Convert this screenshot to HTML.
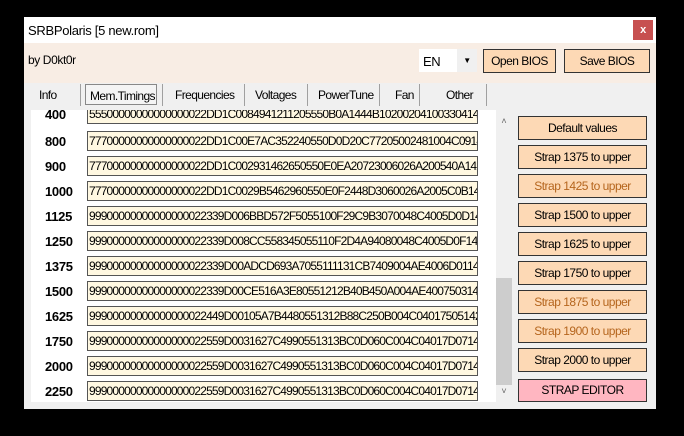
<!DOCTYPE html><html><head><style>
body{margin:0;background:#000;width:684px;height:436px;position:relative;overflow:hidden;font-family:"Liberation Sans",sans-serif;}
.win{position:absolute;left:24px;top:17px;width:632px;height:392px;background:#f0f0f0;}
.title{position:absolute;left:0;top:0;width:632px;height:26px;background:#fff;font-size:13px;letter-spacing:-0.3px}
.title span{position:absolute;left:4px;top:6px;}
.close{position:absolute;left:609px;top:3px;width:20px;height:20px;background:#c75050;color:#fff;font-size:11px;text-align:center;line-height:20px;font-weight:bold}
.head{position:absolute;left:0;top:26px;width:632px;height:40px;background:#f8ede4;font-size:12px;letter-spacing:-0.4px}
.btn{position:absolute;background:#fdd9b5;border:1px solid #333;box-sizing:border-box;font-size:12px;text-align:center;color:#000;letter-spacing:-0.5px;white-space:nowrap}
.tabs{position:absolute;top:66px;left:0;width:632px;height:27px;font-size:12px;letter-spacing:-0.6px}
.tab{position:absolute;top:5px;}
.sep{position:absolute;top:1px;width:1px;height:22px;background:#a0a0a0;}
.panel{position:absolute;left:7px;top:93px;width:473px;height:292px;background:#fff;overflow:hidden;}
.row{position:absolute;left:0;height:20px;}
.lbl{position:absolute;left:14px;top:3px;font-weight:bold;font-size:13px;letter-spacing:-0.3px}
.box{position:absolute;left:56px;top:0;width:391px;height:20px;background:#fff8e1;border:1px solid #555;box-sizing:border-box;font-size:12px;line-height:18px;padding-left:1px;overflow:hidden;white-space:nowrap;letter-spacing:-0.82px}
.sb{position:absolute;left:472px;top:93px;width:16px;height:292px;background:#f0f0f0;}
</style></head><body>
<div class="win">
<div class="title"><span>SRBPolaris [5 new.rom]</span><div class="close">x</div></div>
<div class="head"><span style="position:absolute;left:4px;top:10px">by D0kt0r</span>
<div style="position:absolute;left:395px;top:6px;width:58px;height:23px;background:#fff;font-size:13px"><span style="position:absolute;left:4px;top:5px">EN</span><div style="position:absolute;right:0;top:0;width:20px;height:23px;background:#f0f0f0;font-size:8px;text-align:center;line-height:23px">▼</div></div>
<div class="btn" style="left:459px;top:6px;width:73px;height:24px;line-height:22px">Open BIOS</div>
<div class="btn" style="left:540px;top:6px;width:86px;height:24px;line-height:22px">Save BIOS</div>
</div>
<div class="tabs">
<span class="tab" style="left:15px">Info</span><div class="sep" style="left:56px"></div>
<div style="position:absolute;left:61px;top:1px;width:72px;height:21px;border:1px solid #888;box-sizing:border-box;background:#f4f4f4"></div><span class="tab" style="left:66px;top:6px">Mem.Timings</span><div class="sep" style="left:138px"></div>
<span class="tab" style="left:151px">Frequencies</span><div class="sep" style="left:220px"></div>
<span class="tab" style="left:231px">Voltages</span><div class="sep" style="left:283px"></div>
<span class="tab" style="left:294px">PowerTune</span><div class="sep" style="left:355px"></div>
<span class="tab" style="left:371px">Fan</span><div class="sep" style="left:395px"></div>
<span class="tab" style="left:422px">Other</span><div class="sep" style="left:462px"></div>
</div>
<div class="panel">
<div class="row" style="top:-6px"><span class="lbl" style="top:3px">400</span><div class="box">55500000000000000022DD1C0084941211205550B0A1444B102002041003304142</div></div>
<div class="row" style="top:21px"><span class="lbl">800</span><div class="box">77700000000000000022DD1C00E7AC352240550D0D20C77205002481004C0914</div></div>
<div class="row" style="top:46px"><span class="lbl">900</span><div class="box">77700000000000000022DD1C002931462650550E0EA20723006026A200540A142</div></div>
<div class="row" style="top:71px"><span class="lbl">1000</span><div class="box">77700000000000000022DD1C0029B5462960550E0F2448D3060026A2005C0B142</div></div>
<div class="row" style="top:96px"><span class="lbl">1125</span><div class="box">99900000000000000022339D006BBD572F5055100F29C9B3070048C4005D0D142</div></div>
<div class="row" style="top:121px"><span class="lbl">1250</span><div class="box">99900000000000000022339D008CC558345055110F2D4A94080048C4005D0F142</div></div>
<div class="row" style="top:146px"><span class="lbl">1375</span><div class="box">99900000000000000022339D00ADCD693A7055111131CB7409004AE4006D0114</div></div>
<div class="row" style="top:171px"><span class="lbl">1500</span><div class="box">99900000000000000022339D00CE516A3E80551212B40B450A004AE4007503142</div></div>
<div class="row" style="top:196px"><span class="lbl">1625</span><div class="box">99900000000000000022449D00105A7B4480551312B88C250B004C04017505142</div></div>
<div class="row" style="top:221px"><span class="lbl">1750</span><div class="box">99900000000000000022559D0031627C4990551313BC0D060C004C04017D07142</div></div>
<div class="row" style="top:246px"><span class="lbl">2000</span><div class="box">99900000000000000022559D0031627C4990551313BC0D060C004C04017D07142</div></div>
<div class="row" style="top:271px"><span class="lbl">2250</span><div class="box">99900000000000000022559D0031627C4990551313BC0D060C004C04017D07142</div></div>
</div>
<div class="sb"><div style="position:absolute;top:6px;width:16px;text-align:center;font-size:9px;color:#666">˄</div><div style="position:absolute;left:0;top:168px;width:16px;height:107px;background:#cdcdcd"></div><div style="position:absolute;top:276px;width:16px;text-align:center;font-size:9px;color:#666">˅</div></div>
<div class="btn" style="left:494px;top:99px;width:129px;height:24px;line-height:22px">Default values</div>
<div class="btn" style="left:494px;top:128px;width:129px;height:24px;line-height:22px">Strap 1375 to upper</div>
<div class="btn" style="left:494px;top:157px;width:129px;height:24px;line-height:22px;color:#b5651d">Strap 1425 to upper</div>
<div class="btn" style="left:494px;top:186px;width:129px;height:24px;line-height:22px">Strap 1500 to upper</div>
<div class="btn" style="left:494px;top:215px;width:129px;height:24px;line-height:22px">Strap 1625 to upper</div>
<div class="btn" style="left:494px;top:244px;width:129px;height:24px;line-height:22px">Strap 1750 to upper</div>
<div class="btn" style="left:494px;top:273px;width:129px;height:24px;line-height:22px;color:#b5651d">Strap 1875 to upper</div>
<div class="btn" style="left:494px;top:302px;width:129px;height:24px;line-height:22px;color:#b5651d">Strap 1900 to upper</div>
<div class="btn" style="left:494px;top:331px;width:129px;height:24px;line-height:22px">Strap 2000 to upper</div>
<div class="btn" style="left:494px;top:362px;width:129px;height:23px;line-height:21px;background:#ffb6c1">STRAP EDITOR</div>
</div>
</body></html>
